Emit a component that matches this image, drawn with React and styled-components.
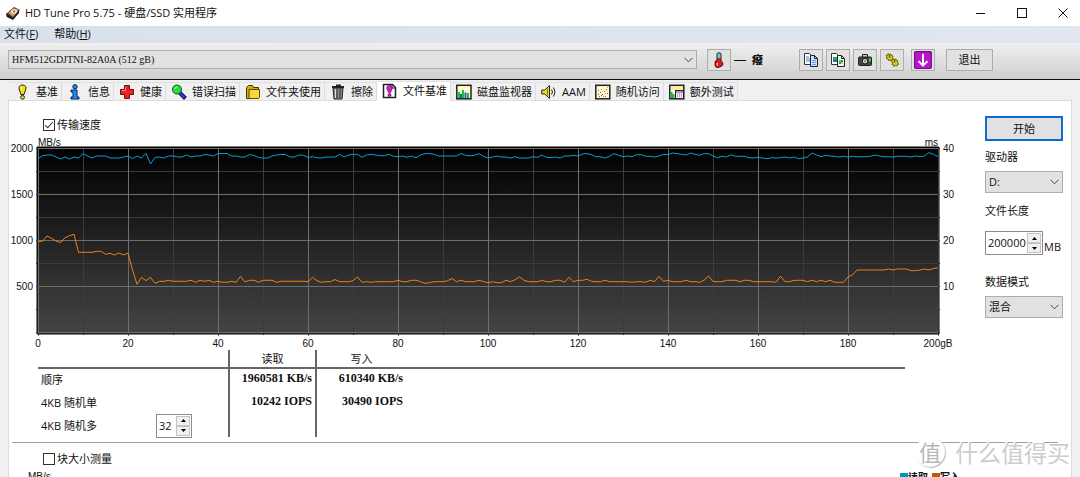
import React from "react";
import styled, { createGlobalStyle, css } from "styled-components";

const UI = `"Open Sans", "Noto Sans CJK SC", sans-serif`;
const ARIAL = `"Liberation Sans", Arial, sans-serif`;
const SERIF = `"Liberation Serif", "Noto Sans CJK SC", serif`;

const GlobalStyle = createGlobalStyle`
  *, *::before, *::after { box-sizing: border-box; }
  html, body { margin: 0; background: #f0f0f0; }
  body, button, input, select { font: 11px/16px ${UI}; color: #111; }
  button, input, select { margin: 0; padding: 0; border-radius: 0; }
  svg { display: block; }
`;

const Window = styled.div`
  position: relative;
  display: flex;
  flex-direction: column;
  height: 100vh;
  overflow: hidden;
`;

const TitleBar = styled.header`
  display: flex;
  flex: none;
  align-items: center;
  height: 26px;
  padding-left: 5px;
  background: #fff;
`;

const Title = styled.h1`
  flex: 1;
  margin: 0 0 0 4px;
  font-size: 11px;
  font-weight: 400;
`;

const WindowButtons = styled.div`
  display: flex;
  margin-right: -3px;
`;

const WindowButton = styled.button`
  display: grid;
  place-items: center;
  width: 41px;
  height: 24px;
  border: 0;
  background: none;
`;

const MenuBar = styled.nav`
  display: flex;
  flex: none;
  gap: 16px;
  height: 17px;
  padding-left: 4px;
  background: linear-gradient(90deg, #d9e1eb, #e1e6f0);
`;

const MenuLink = styled.a`
  color: #111;
  text-decoration: none;
`;

const Toolbar = styled.div`
  display: flex;
  flex: none;
  align-items: center;
  height: 37px;
  padding: 0 87px 3px 8px;
  border-bottom: 1px solid #111;
  background: linear-gradient(#f0f0f0, #cfcfcf);
`;

const Picker = styled.div`
  display: grid;
  grid-template-columns: 1fr 18px;
  align-items: center;
  flex: ${(p) => (p.$wide ? 1 : "none")};

  select {
    grid-area: 1 / 1 / 2 / 3;
    width: 100%;
    height: ${(p) => (p.$wide ? 19 : 22)}px;
    padding-left: 3px;
    border: 1px solid #adadad;
    background: #e1e1e1;
    appearance: none;
    ${(p) => p.$wide && css`font-family: ${SERIF}; font-size: 10px;`}
  }
  svg {
    grid-area: 1 / 2;
    justify-self: center;
    pointer-events: none;
  }
`;

const ToolButton = styled.button`
  display: grid;
  place-items: center;
  width: ${(p) => p.$width || 24}px;
  height: 22px;
  margin-left: ${(p) => p.$gap || 3}px;
  border: 1px solid #adadad;
  background: #e1e1e1;
`;

const Temperature = styled.output`
  display: flex;
  align-items: center;
  gap: 6px;
  width: 65px;
  padding-left: 3px;
  font-weight: 900;
  white-space: nowrap;

  span {
    font: 12px/16px ${ARIAL};
  }
`;

const TabStrip = styled.div`
  display: flex;
  flex: none;
  align-items: flex-end;
  height: 20px;
  padding-left: 10px;
`;

const Tab = styled.button`
  display: flex;
  align-items: center;
  gap: 5px;
  height: ${(p) => (p.$active ? 20 : 18)}px;
  padding: 0 3px ${(p) => (p.$active ? 2 : 0)}px 5px;
  border: 0;
  border-top: 1px solid #e0e0e0;
  border-right: 1px solid #dcdcdc;
  background: ${(p) => (p.$active ? "#fff" : "#f0f0f0")};
  white-space: nowrap;
  ${(p) => p.$active && css`position: relative; z-index: 1; margin-bottom: -1px;`}
`;

const Panel = styled.main`
  flex: 1;
  min-height: 0;
  margin: 0 8px;
  border: 1px solid #dcdcdc;
  border-bottom: 0;
  background: #fff;
`;

const Upper = styled.div`
  display: flex;
`;

const Primary = styled.section`
  flex: 1;
  min-width: 0;
  padding-top: 17px;
`;

const CheckLabel = styled.label`
  display: flex;
  align-items: center;
  gap: 2px;
  height: 14px;
  margin-left: 34px;
`;

const CheckBox = styled.input`
  display: grid;
  place-content: center;
  width: 12px;
  height: 12px;
  border: 1px solid #333;
  background: #fff;
  appearance: none;

  &:checked::before {
    content: "";
    width: 4px;
    height: 8px;
    margin-bottom: 2px;
    border: solid #222;
    border-width: 0 1px 1px 0;
    transform: rotate(42deg);
  }
`;

const ChartGrid = styled.div`
  display: grid;
  grid-template-columns: 29px 1fr 47px;
  grid-template-rows: 11px 185px 17px;
  margin-top: 5px;
  font: 10px/11px ${ARIAL};
`;

const Units = styled.div`
  display: flex;
  grid-column: 2;
  justify-content: space-between;
`;

const Scale = styled.div`
  display: flex;
  flex-direction: column;
  grid-area: 2 / ${(p) => p.$column};
  justify-content: space-between;
  padding: 0 5px;
  text-align: ${(p) => (p.$column === 1 ? "right" : "left")};

  span {
    display: flex;
    align-items: center;
    justify-content: ${(p) => (p.$column === 1 ? "flex-end" : "flex-start")};
    height: 0;
  }
`;

const Plot = styled.svg`
  grid-area: 2 / 2;
  width: 100%;
  height: 185px;
  overflow: visible;
`;

const TimeScale = styled.div`
  display: flex;
  grid-area: 3 / 2;
  justify-content: space-between;
  padding-top: 5px;

  span {
    display: flex;
    justify-content: center;
    width: 0;
    white-space: nowrap;
  }
`;

const Results = styled.table`
  width: calc(100% - 109px);
  margin-left: 29px;
  border-collapse: collapse;
  table-layout: fixed;

  th, td { padding: 0; font-weight: 400; }
  thead tr { height: 18px; border-bottom: 2px solid #666; }
  thead th { line-height: 15px; }
  tbody tr { height: 23px; }
  tbody th { padding-left: 3px; text-align: left; }
`;

const ResultHead = styled.th`
  border-left: 2px solid #666;
`;

const Reading = styled.td`
  border-left: 2px solid #666;
  && {
    padding: 0 3px 4px 0;
    font: 700 12px/16px ${SERIF};
    text-align: right;
  }
`;

const QueueRow = styled.div`
  display: flex;
  align-items: center;
  justify-content: space-between;
  height: 23px;
  padding-right: 36px;
`;

const SpinBox = styled.div`
  display: flex;
  width: ${(p) => p.$width}px;
  height: 24px;
  padding: 1px;
  border: 1px solid #8a8a8a;
  background: #fff;

  input {
    flex: 1;
    min-width: 0;
    padding-left: 1px;
    border: 0;
    background: none;
  }
`;

const Steps = styled.div`
  display: grid;
  grid-template-rows: 1fr 1fr;
  width: 14px;

  button {
    display: grid;
    place-items: center;
    border: 1px solid #c4c4c4;
    background: #f0f0f0;
  }
`;

const Sidebar = styled.aside`
  flex: none;
  width: 78px;
  margin-right: 8px;
  padding-top: 15px;
`;

const StartButton = styled.button`
  width: 100%;
  height: 25px;
  border: 2px solid #0a6cd0;
  background: #e1e1e1;
`;

const Field = styled.div`
  display: flex;
  flex-direction: column;
  gap: ${(p) => p.$gap || 6}px;
  margin-top: ${(p) => p.$top || 8}px;
`;

const SizeRow = styled.div`
  display: flex;
  align-items: flex-end;
  gap: 1px;
`;

const Divider = styled.hr`
  height: 1px;
  margin: 5px 13px 9px 3px;
  border: 0;
  background: #a0a0a0;
`;

const LegendRow = styled.div`
  display: flex;
  justify-content: space-between;
  margin-top: 3px;
  padding: 0 111px 0 19px;
  font: 10px/16px ${ARIAL};
`;

const Legend = styled.div`
  display: flex;
  gap: 4px;
  font: 700 10px/14px ${UI};
`;

const LegendItem = styled.span`
  display: flex;
  align-items: center;

  &::before {
    content: "";
    width: 8px;
    height: 8px;
    background: ${(p) => p.$color};
  }
`;

const Watermark = styled.div`
  position: absolute;
  right: 10px;
  bottom: 9px;
  display: flex;
  align-items: center;
  gap: 10px;
  color: #cdcdcd;
  font: 23px/32px "Noto Sans CJK SC", sans-serif;
  text-shadow: -1px -1px 0 #fff, 1px 1px 1px #fff;
`;

const Seal = styled.span`
  width: 30px;
  height: 30px;
  border-radius: 50%;
  background: #fff;
  box-shadow: 1px 1px 1px #bbb;
  color: #b8b8b8;
  font-size: 22px;
  line-height: 28px;
  text-align: center;
  text-shadow: none;
`;

const READ = [
  1885, 1917, 1924, 1924, 1903, 1881, 1903, 1881, 1903, 1892, 1939, 1914, 1892, 1914, 1914, 1914, 1892, 1892, 1892, 1903,
  1914, 1885, 1914, 1892, 1943, 1827, 1897, 1903, 1892, 1914, 1914, 1903, 1903, 1924, 1903, 1914, 1914, 1930, 1924, 1914,
  1941, 1941, 1941, 1914, 1914, 1903, 1903, 1930, 1919, 1897, 1892, 1892, 1914, 1924, 1930, 1930, 1903, 1903, 1924, 1921,
  1899, 1906, 1895, 1892, 1903, 1903, 1903, 1932, 1903, 1924, 1932, 1932, 1899, 1924, 1932, 1924, 1917, 1917, 1932, 1910,
  1906, 1914, 1899, 1914, 1895, 1924, 1939, 1939, 1932, 1914, 1914, 1914, 1914, 1914, 1939, 1921, 1917, 1921, 1939, 1910,
  1892, 1903, 1914, 1903, 1903, 1892, 1906, 1892, 1892, 1892, 1906, 1899, 1924, 1899, 1895, 1903, 1892, 1914, 1914, 1921,
  1914, 1935, 1939, 1928, 1906, 1906, 1892, 1910, 1939, 1921, 1906, 1914, 1906, 1928, 1928, 1910, 1910, 1903, 1914, 1932,
  1928, 1946, 1939, 1932, 1924, 1946, 1932, 1921, 1939, 1939, 1914, 1895, 1910, 1903, 1926, 1910, 1910, 1910, 1895, 1892,
  1899, 1892, 1884, 1895, 1892, 1895, 1903, 1892, 1903, 1884, 1892, 1903, 1946, 1924, 1906, 1921, 1914, 1910, 1903, 1910,
  1903, 1910, 1906, 1906, 1906, 1910, 1924, 1914, 1906, 1906, 1903, 1910, 1910, 1910, 1903, 1914, 1906, 1914, 1950, 1932,
  1906,
];

const WRITE = [
  991, 991, 1049, 1024, 995, 976, 1030, 1052, 1067, 872, 872, 872, 872, 883, 883, 851, 862, 843, 865, 843,
  865, 681, 526, 602, 565, 602, 537, 559, 559, 570, 559, 559, 559, 559, 570, 548, 570, 559, 570, 548,
  559, 548, 548, 559, 548, 613, 552, 570, 570, 548, 570, 570, 570, 548, 559, 559, 559, 559, 559, 559,
  555, 602, 565, 548, 555, 555, 578, 555, 555, 555, 565, 606, 548, 555, 548, 555, 555, 555, 555, 555,
  570, 555, 555, 570, 570, 555, 537, 544, 555, 555, 555, 565, 589, 555, 570, 555, 555, 555, 570, 555,
  544, 555, 544, 544, 570, 555, 575, 606, 570, 555, 555, 555, 568, 555, 555, 570, 570, 548, 602, 555,
  570, 570, 580, 558, 555, 555, 570, 555, 555, 555, 555, 555, 548, 555, 555, 548, 570, 555, 613, 558,
  570, 555, 555, 555, 570, 555, 555, 548, 570, 615, 558, 555, 555, 570, 570, 570, 555, 570, 570, 555,
  555, 555, 555, 555, 548, 615, 555, 555, 570, 570, 570, 555, 570, 555, 570, 555, 570, 548, 548, 548,
  606, 628, 681, 681, 681, 681, 681, 681, 681, 692, 681, 692, 692, 692, 674, 674, 681, 692, 681, 697,
  705,
];

const toPoints = (series) =>
  series.map((v, i) => `${i * 4.5},${(185 * (1 - v / 2000)).toFixed(1)}`).join(" ");

const steps = (count) => Array.from({ length: count }, (_, i) => i);

function SpeedPlot() {
  return (
    <Plot viewBox="0 0 900 185" preserveAspectRatio="none" role="img" aria-label="传输速度">
      <defs>
        <linearGradient id="plotFill" x1="0" y1="0" x2="0" y2="1">
          <stop offset="0" stopColor="#000" />
          <stop offset="1" stopColor="#444" />
        </linearGradient>
      </defs>
      <rect x="-1" y="-1" width="902" height="187" fill="url(#plotFill)" />
      <g fill="#3c3c3c">
        {steps(4).map((i) => <rect key={i} x="-2" y={23 + i * 46} width="904" height="1" />)}
        {steps(10).map((i) => <rect key={i} x={45 + i * 90} y="0" width="1" height="187" />)}
      </g>
      <g fill="#6e6e6e">
        {steps(5).map((i) => <rect key={i} x="-2" y={i * 46} width="904" height="1" />)}
        {steps(11).map((i) => <rect key={i} x={i * 90} y="0" width="1" height="188" />)}
      </g>
      <rect x="-1" y="-1" width="902" height="187" fill="none" stroke="#000" vectorEffect="non-scaling-stroke" />
      <polyline points={toPoints(READ)} fill="none" stroke="#00a2d8" vectorEffect="non-scaling-stroke" />
      <polyline points={toPoints(WRITE)} fill="none" stroke="#f08010" vectorEffect="non-scaling-stroke" />
    </Plot>
  );
}

const Icon = ({ children, size = 16 }) => (
  <svg width={size} height={size} viewBox="0 0 16 16" aria-hidden="true">{children}</svg>
);

const Chevron = () => (
  <svg width="9" height="6" viewBox="0 0 9 6" fill="none" stroke="#444" aria-hidden="true">
    <path d="M.5 .8 4.5 4.8 8.5 .8" />
  </svg>
);

const icons = {
  disk: <Icon><path d="M1 9 9 2l6 3-7 9-6-2z" fill="#3d3028" /><path d="m3 8 6-5 5 2-6 7z" fill="#c99b63" /><ellipse cx="9" cy="6.5" rx="3" ry="2.3" fill="#f5dfb8" /><circle cx="9" cy="6.5" r="1" fill="#795438" /><path d="m1 9 7 4 6-8v3l-6 7-6-3z" fill="#1d1d22" /></Icon>,
  bulb: <Icon><path d="M7.500 1C4.500 1 3.500 3 4.200 5.200L6 10.500h3l1.800-5.300C11.500 3 10.500 1 7.500 1z" fill="#f2e21a" stroke="#222" /><path d="M6.500 2.500v3" stroke="#fff" /><circle cx="7.500" cy="13.300" r="1.900" fill="#f2e21a" stroke="#222" /></Icon>,
  info: <Icon><circle cx="8" cy="2.800" r="2.200" fill="#1593ff" stroke="#08214a" /><path d="M4 6h6v7h2v2H4v-2h2V8H4z" fill="#1593ff" stroke="#08214a" /></Icon>,
  health: <Icon><path d="M5.500 1.500h5v4h4v5h-4v4h-5v-4h-4v-5h4z" fill="#ee2222" stroke="#6b1010" /><path d="M6.500 3v3.500H3" fill="none" stroke="#ff8b80" /></Icon>,
  scan: <Icon><path d="m8.500 8.500 6 6" stroke="#111c70" strokeWidth="4" /><path d="m9 9 4.500 4.500" stroke="#3355e0" strokeWidth="1.500" /><circle cx="6" cy="5.500" r="4.500" fill="#28dc3c" stroke="#14511d" /><path d="M3.500 5q.5-2 2.500-2" stroke="#c8ffc8" fill="none" /></Icon>,
  folder: <Icon><path d="M1.500 14.500v-11l2-2h4l1 2h5v11z" fill="#d9b000" stroke="#3f3300" /><path d="M4 5.500h10.500v8l-1 1H4z" fill="#f7d83c" stroke="#594900" /></Icon>,
  trash: <Icon><path d="M2 3h12M6 1.500h4v2" fill="none" stroke="#222" strokeWidth="2" /><path d="M3 4h10l-1 11H4z" fill="#888" stroke="#222" /><path d="M7 5v9M10 5v9" stroke="#333" /><path d="M5.500 5v9" stroke="#ddd" /></Icon>,
  fileBench: <Icon><path d="M1.500 1.500h9l3 3v10h-12z" fill="#fff" stroke="#222" strokeWidth="1.500" /><path d="M10 1.500V5h3.500" fill="none" stroke="#222" /><path d="M7.500 2.500C5 2.500 4.400 4.300 5 6l1.500 3.500h2L10 6c.6-1.700 0-3.500-2.500-3.500z" fill="#e01be0" stroke="#550055" strokeWidth=".7" /><circle cx="7.500" cy="12" r="1.500" fill="#e01be0" stroke="#550055" strokeWidth=".7" /></Icon>,
  monitor: <Icon><rect x=".8" y="1.300" width="14.200" height="13.500" fill="#fffbd0" stroke="#222" strokeWidth="1.500" /><path d="M3 14V8M7 14V6M12 14V9" stroke="#15c52d" strokeWidth="2" /><path d="M5 14v-4M9.500 14V8.500" stroke="#2456df" strokeWidth="2" /></Icon>,
  speaker: <Icon><path d="M.8 6h3L8.500 1.500v13L3.800 10h-3z" fill="#f2e020" stroke="#222" /><path d="M6.500 4.500v7" stroke="#8a7b00" /><path d="M10.500 5.500q2 2.500 0 5M12.500 3.500q3 4.500 0 9" fill="none" stroke="#222" /></Icon>,
  random: <Icon><rect x=".8" y="1.300" width="14" height="13.500" fill="#fffbd0" stroke="#222" strokeWidth="1.500" /><g fill="#e03030"><path d="M3 10h1v1H3zM5 8h1v1H5zM7 10h1v1H7zM9 7h1v1H9zM11 5h1v1h-1zM4 12h1v1H4zM12 9h1v1h-1z" /></g><g fill="#e6961e"><path d="M6 5h1v1H6zM10 9h1v1h-1zM8 12h1v1H8zM12 3h1v1h-1z" /></g><path d="M3 6h1v1H3zM10 12h1v1h-1zM6 11h1v1H6z" fill="#5162dc" /></Icon>,
  extra: <Icon><rect x=".8" y="1.300" width="14" height="13.500" fill="#fff" stroke="#222" strokeWidth="1.500" /><path d="M2 4h12" stroke="#f8f1a0" strokeWidth="4" /><path d="M2.500 14V8M4.500 14v-4" stroke="#17bd2e" strokeWidth="2" /><rect x="6.500" y="6.500" width="8" height="8" fill="#eef" stroke="#222" /><path d="M7 8h7" stroke="#555" /><path d="M8 10h1M10 10h1M12 10h1M8 12h1M10 12h1M12 12h1" stroke="#e03060" /></Icon>,
  thermometer: <Icon><path d="M6 1.500q2-1.500 4 0V9q2 1 2 3t-4 3.300T4 12t2-3z" fill="#e51919" stroke="#3b1515" /><path d="M6.500 1.500h3V6h-3z" fill="#35dfe8" /><path d="M6.500 11q-1 1.500 0 2.500" fill="none" stroke="#fff" /></Icon>,
  copyText: <Icon><path d="M1.500 1.500h5l2 2v9h-7z" fill="#fff" stroke="#333" /><path d="M3 5h3M3 7h4M3 9h4" stroke="#3d85d8" /><path d="M7.500 3.500h4l3 3v8h-7z" fill="#c6e2ff" stroke="#222" /><path d="M11.500 3.500v3h3" fill="none" stroke="#222" /><path d="M9 8.500h4M9 10.500h4M9 12.500h4" stroke="#5b9ff0" /></Icon>,
  copyImage: <Icon><path d="M1.500 1.500h5l2 2v9h-7z" fill="#fff" stroke="#333" /><path d="M3 5h4v4H3z" fill="#23a946" /><path d="M3 8h4v2H3z" fill="#2a63d3" /><path d="M7.500 3.500h4l3 3v8h-7z" fill="#f4f4e8" stroke="#222" /><path d="M11.500 3.500v3h3" fill="none" stroke="#222" /><path d="M9 8h4v4H9z" fill="#18a64a" /><path d="M9 8h2v2H9z" fill="#23c5e8" /><path d="M11 10h2v2h-2z" fill="#e6c922" /></Icon>,
  camera: <Icon><path d="M5.500 5V2.500h5V5" fill="#ccc" stroke="#222" /><rect x="1.500" y="5" width="13" height="8.500" rx="1" fill="#444" stroke="#222" /><circle cx="8" cy="9.200" r="2.800" fill="#ddd" stroke="#111" /><circle cx="8" cy="9.200" r="1.200" fill="#888" /><path d="M12 6.500h2v3h-2z" fill="#27dc37" /></Icon>,
  settings: <Icon><g fill="#d8cc15" stroke="#6c6400"><path d="M2 3.500 3.500 3l.5-1.500 1.500 1 1.500-.5.5 1.500 1.500.5-.5 1.500 1 1.500-1.500.5L7.500 9 6 8l-1.500.5L4 7l-1.500-.5L3 5z" /><path d="m7 8.500 1.500-.5.5-1.500 1.500 1 1.500-.5.5 1.500 1.500.5-.5 1.500 1.500 1.500-1.500.5-.5 1.500-1.500-.5-1.500 1-.5-1.500-1.500-.5.5-1.500z" /></g><path d="M5.500 2.500v3M10.500 7.500v3" stroke="#555" strokeWidth="1.500" /></Icon>,
  save: <Icon size={18}><rect x=".5" y=".5" width="15" height="15" rx="1" fill="#b616c5" stroke="#7b0d87" /><path d="M8 2.500v10M4 9l4 4 4-4" fill="none" stroke="#fff" strokeWidth="1.700" /></Icon>,
};

const TABS = [
  ["bulb", "基准"], ["info", "信息"], ["health", "健康"], ["scan", "错误扫描"],
  ["folder", "文件夹使用"], ["trash", "擦除"], ["fileBench", "文件基准"],
  ["monitor", "磁盘监视器"], ["speaker", "AAM"], ["random", "随机访问"], ["extra", "额外测试"],
];

function Spinner({ width, value, label, id }) {
  return (
    <SpinBox $width={width}>
      <input id={id} type="text" defaultValue={value} aria-label={label} />
      <Steps>
        <button aria-label="增加"><svg width="5" height="3" viewBox="0 0 5 3"><path d="M0 3 2.500 0 5 3z" /></svg></button>
        <button aria-label="减少"><svg width="5" height="3" viewBox="0 0 5 3"><path d="M0 0 2.500 3 5 0z" /></svg></button>
      </Steps>
    </SpinBox>
  );
}

export default function App() {
  return (
    <Window>
      <GlobalStyle />
      <TitleBar>
        {icons.disk}
        <Title>HD Tune Pro 5.75 - 硬盘/SSD 实用程序</Title>
        <WindowButtons>
          <WindowButton aria-label="最小化"><svg width="10" height="10"><path d="M0 5.500h9" stroke="#111" /></svg></WindowButton>
          <WindowButton aria-label="最大化"><svg width="10" height="10"><rect x=".5" y=".5" width="9" height="9" fill="none" stroke="#111" /></svg></WindowButton>
          <WindowButton aria-label="关闭"><svg width="10" height="10"><path d="m.5 .5 9 9m0-9-9 9" stroke="#111" /></svg></WindowButton>
        </WindowButtons>
      </TitleBar>
      <MenuBar>
        <MenuLink href="#file">文件(<u>F</u>)</MenuLink>
        <MenuLink href="#help">帮助(<u>H</u>)</MenuLink>
      </MenuBar>
      <Toolbar>
        <Picker $wide>
          <select aria-label="磁盘"><option>HFM512GDJTNI-82A0A (512 gB)</option></select>
          <Chevron />
        </Picker>
        <ToolButton $gap={10} aria-label="温度">{icons.thermometer}</ToolButton>
        <Temperature><span>—</span>癈</Temperature>
        <ToolButton aria-label="复制文本">{icons.copyText}</ToolButton>
        <ToolButton aria-label="复制图像">{icons.copyImage}</ToolButton>
        <ToolButton aria-label="截图">{icons.camera}</ToolButton>
        <ToolButton aria-label="选项">{icons.settings}</ToolButton>
        <ToolButton $gap={7} aria-label="保存">{icons.save}</ToolButton>
        <ToolButton $gap={11} $width={47}>退出</ToolButton>
      </Toolbar>
      <TabStrip role="tablist">
        {TABS.map(([icon, name]) => {
          const active = name === "文件基准";
          return <Tab key={name} role="tab" aria-selected={active} $active={active}>{icons[icon]}{name}</Tab>;
        })}
      </TabStrip>
      <Panel>
        <Upper>
          <Primary>
            <CheckLabel><CheckBox type="checkbox" defaultChecked />传输速度</CheckLabel>
            <ChartGrid>
              <Units><span>MB/s</span><span>ms</span></Units>
              <Scale $column={1}><span>2000</span><span>1500</span><span>1000</span><span>500</span><span /></Scale>
              <SpeedPlot />
              <Scale $column={3}><span>40</span><span>30</span><span>20</span><span>10</span><span /></Scale>
              <TimeScale>
                {steps(11).map((i) => <span key={i}>{i * 20}{i === 10 && "gB"}</span>)}
              </TimeScale>
            </ChartGrid>
            <Results>
              <colgroup><col style={{ width: 191 }} /><col style={{ width: 87 }} /><col style={{ width: 90 }} /><col /></colgroup>
              <thead>
                <tr><td /><ResultHead scope="col">读取</ResultHead><ResultHead scope="col">写入</ResultHead><td /></tr>
              </thead>
              <tbody>
                <tr><th scope="row">顺序</th><Reading>1960581 KB/s</Reading><Reading>610340 KB/s</Reading><td /></tr>
                <tr><th scope="row">4KB 随机单</th><Reading>10242 IOPS</Reading><Reading>30490 IOPS</Reading><td /></tr>
                <tr>
                  <th scope="row"><QueueRow><label htmlFor="queue">4KB 随机多</label><Spinner id="queue" width={36} value="32" /></QueueRow></th>
                  <Reading /><Reading /><td />
                </tr>
              </tbody>
            </Results>
          </Primary>
          <Sidebar>
            <StartButton>开始</StartButton>
            <Field>
              <label htmlFor="drive">驱动器</label>
              <Picker><select id="drive"><option>D:</option></select><Chevron /></Picker>
            </Field>
            <Field $top={10} $gap={12}>
              <label htmlFor="length">文件长度</label>
              <SizeRow><Spinner id="length" width={58} value="200000" />MB</SizeRow>
            </Field>
            <Field $top={19}>
              <label htmlFor="mode">数据模式</label>
              <Picker><select id="mode"><option>混合</option></select><Chevron /></Picker>
            </Field>
          </Sidebar>
        </Upper>
        <Divider />
        <CheckLabel><CheckBox type="checkbox" />块大小测量</CheckLabel>
        <LegendRow>
          <span>MB/s</span>
          <Legend><LegendItem $color="#0095c8">读取</LegendItem><LegendItem $color="#c05a00">写入</LegendItem></Legend>
        </LegendRow>
      </Panel>
      <Watermark><Seal>值</Seal>什么值得买</Watermark>
    </Window>
  );
}
